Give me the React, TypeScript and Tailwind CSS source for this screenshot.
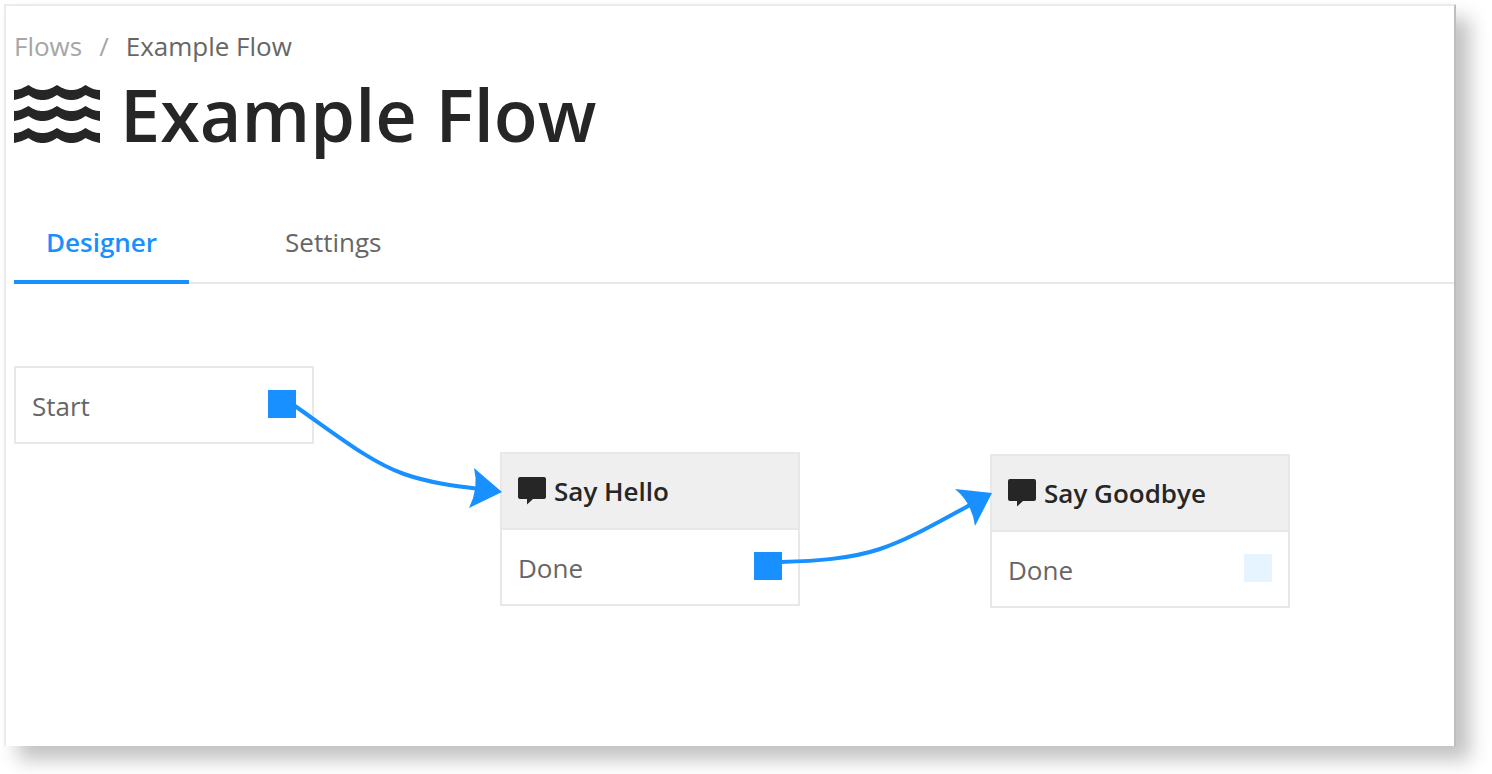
import type { ReactNode } from "react"

const crumbs = [
  { label: "Flows", href: "#flows" },
]

const tabs = [
  { label: "Designer", active: true },
  { label: "Settings", active: false },
]

function WavesIcon() {
  return (
    <svg width="86" height="60" viewBox="0 0 86 60" fill="#262626" className="shrink-0" aria-hidden="true">
      {[1, 22, 44].map((y) => (
        <path
          key={y}
          transform={`translate(0 ${y})`}
          d="M0 5C5 5 9 3 14.500 0C20 4 24 5 28.700 5C33 5 37 4 43 0C49 4 53 5 57.500 5C62 5 66 4 71.500 0C76 3 81 5 86 5V15C80 14 76 12 71.500 10C66 14 62 15 57.500 15C53 15 49 14 43 10C37 14 33 15 28.700 15C24 15 20 14 14.500 10C10 12 6 14 0 15Z"
        />
      ))}
    </svg>
  )
}

function CommentIcon() {
  return (
    <svg width="28" height="28" viewBox="0 0 28 28" fill="#262626" className="shrink-0" aria-hidden="true">
      <path d="M2 0H26Q28 0 28 2V20Q28 22 26 22H15L9 27.500V22H2Q0 22 0 20V2Q0 0 2 0Z" />
    </svg>
  )
}

function Port({ label, connected = true }: { label: string; connected?: boolean }) {
  return (
    <div className="flex h-[74px] items-start justify-between px-4 pt-[22px] text-[#666666]">
      <span className="leading-8">{label}</span>
      <button
        aria-label={`${label} port`}
        className={connected ? "size-7 bg-[#1890ff]" : "size-7 bg-[#e6f4ff]"}
      />
    </div>
  )
}

function FlowNode({ title, className, children }: { title?: string; className: string; children: ReactNode }) {
  return (
    <div className={`absolute w-[300px] border-2 border-[#e8e8e8] bg-white ${className}`}>
      {title && (
        <div className="flex h-[76px] items-center gap-2 border-b-2 border-[#e8e8e8] bg-[#efefef] px-4 font-semibold text-[#262626]">
          <CommentIcon />
          <span>{title}</span>
        </div>
      )}
      {children}
    </div>
  )
}

export default function App() {
  return (
    <div className="flex min-h-screen bg-white pt-1 pr-9 pb-7 pl-1 font-['Open_Sans',sans-serif] text-[26px] leading-9">
      <main className="flex flex-1 flex-col border-t-2 border-r-2 border-l-2 border-[#ebebeb] border-r-[#bdbdbd] bg-white pl-2 shadow-[14px_14px_18px_rgba(0,0,0,0.24)]">
        <nav aria-label="Breadcrumb" className="flex gap-[17px] pt-[22px] text-[#666666]">
          {crumbs.map((crumb) => (
            <span key={crumb.label} className="flex gap-[17px] text-[#a6a6a6]">
              <a href={crumb.href}>{crumb.label}</a>
              <span>/</span>
            </span>
          ))}
          <span>Example Flow</span>
        </nav>

        <h1 className="flex h-[100px] items-center gap-5 text-[72px] leading-[100px] font-semibold text-[#262626]">
          <WavesIcon />
          Example Flow
        </h1>

        <div role="tablist" className="mt-8 flex gap-16 border-b-2 border-[#e8e8e8]">
          {tabs.map((tab) => (
            <button
              key={tab.label}
              role="tab"
              aria-selected={tab.active}
              className={
                tab.active
                  ? "-mb-0.5 h-[88px] border-b-4 border-[#1890ff] px-8 pt-2 font-semibold text-[#1890ff]"
                  : "h-[86px] px-8 pt-1.5 text-[#666666]"
              }
            >
              {tab.label}
            </button>
          ))}
        </div>

        <section aria-label="Flow canvas" className="relative min-h-[460px] flex-1">
          <FlowNode className="top-[82px] left-0">
            <Port label="Start" />
          </FlowNode>
          <FlowNode title="Say Hello" className="top-[168px] left-[486px]">
            <Port label="Done" />
          </FlowNode>
          <FlowNode title="Say Goodbye" className="top-[170px] left-[976px]">
            <Port label="Done" connected={false} />
          </FlowNode>
          <svg
            width="1300"
            height="340"
            viewBox="14 284 1300 340"
            className="pointer-events-none absolute top-0 left-0"
            aria-hidden="true"
          >
            <g fill="none" stroke="#1890ff" strokeWidth="4">
              <path d="M295 406C335 434 370 462 404 474C430 483 455 486 480 489" />
              <path d="M781 562C815 561 850 559 880 549C910 539 940 521 970 505" />
            </g>
            <g fill="#1890ff">
              <path d="M502 492L474 468Q479 488 469 508Z" />
              <path d="M992 493L955 489Q972 503 975 526Z" />
            </g>
          </svg>
        </section>
      </main>
    </div>
  )
}
